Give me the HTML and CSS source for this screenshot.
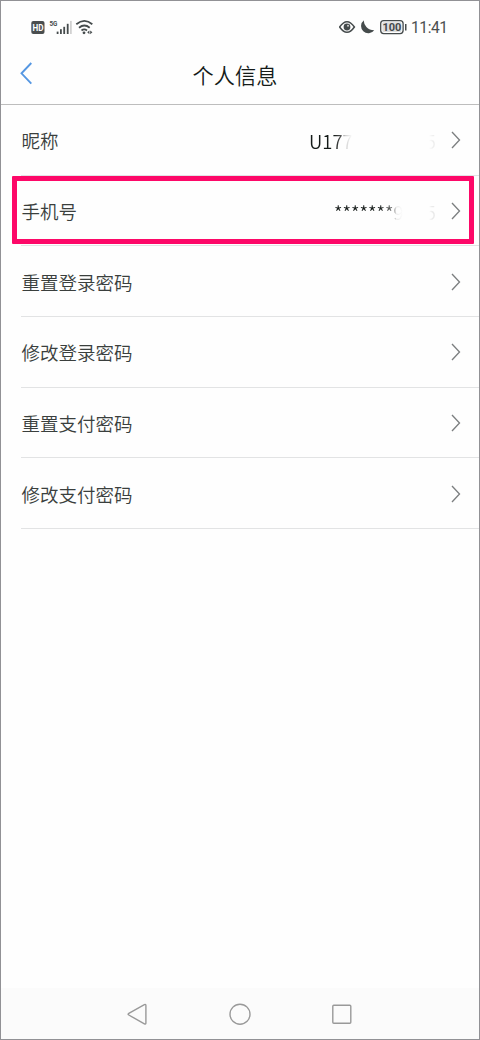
FILE: index.html
```html
<!DOCTYPE html>
<html lang="zh-CN">
<head>
<meta charset="utf-8">
<title>个人信息</title>
<link rel="stylesheet" href="styles.css">
</head>
<body>
<div class="phone">
  <div class="status">
    <svg class="status-left" width="64" height="20" viewBox="0 0 64 20">
      <rect x="0.3" y="4" width="13.2" height="13" rx="2" fill="#4a4e4f"/>
      <text x="1.5" y="14" class="hd" textLength="11" lengthAdjust="spacingAndGlyphs">HD</text>
      <text x="18.4" y="9.4" class="net" textLength="8" lengthAdjust="spacingAndGlyphs">5G</text>
      <g fill="#454b4c"><rect x="25.7" y="14.6" width="1.8" height="2.4"/><rect x="29" y="12.2" width="1.8" height="4.8"/><rect x="32.3" y="9.8" width="1.8" height="7.2"/><rect x="35.8" y="6.8" width="1.8" height="10.2"/></g>
      <rect x="39.1" y="3.9" width="1.6" height="13.1" fill="#ccc"/>
      <g fill="none" stroke="#454b4c" stroke-width="1.8"><path d="M45.3 7.3Q53.4 .5 61.3 7.3M48 10.7Q53.4 6.2 58.7 10.7M50.5 13.5Q53.2 11.4 56 13.5"/></g>
      <circle cx="53" cy="15.8" r="1.4" fill="#454b4c"/>
      <path d="M58.4 13.4L56.2 15.3L58.4 17.2ZM59.2 13.4L61.4 15.3L59.2 17.2Z" fill="#454b4c"/>
    </svg>
    <div class="status-right">
      <svg width="68" height="20" viewBox="0 0 68 20">
        <path d="M.6 10Q8 -.6 15.4 10Q8 20.6 .6 10Z" fill="none" stroke="#454b4c" stroke-width="1.5"/>
        <circle cx="8" cy="10" r="3.4" fill="#454b4c"/><circle cx="9" cy="8.8" r="1" fill="#ccc"/>
        <path d="M25 3.3A7.2 7.2 0 1 0 35.2 13.2Q30.5 13.2 27.4 10Q24.4 6.9 25 3.3Z" fill="#454b4c"/>
        <rect x="41.7" y="3.6" width="22.4" height="13" rx="3" fill="#fff" stroke="#454b4c" stroke-width="1.3"/>
        <rect x="43.4" y="5.3" width="19" height="9.6" rx="1" fill="#ddd"/>
        <text x="43.4" y="14" class="battery" textLength="19" lengthAdjust="spacingAndGlyphs">100</text>
        <rect x="66" y="7" width="1.5" height="6.5" fill="#454b4c"/>
      </svg>
      <span class="time">11:41</span>
    </div>
  </div>
  <header class="header">
    <svg class="back" width="13" height="23" viewBox="0 0 13 23"><path d="M11.3 1L1.5 11.3L11.3 21.6" fill="none" stroke="#5597e2" stroke-width="1.9"/></svg>
    <h1 class="title">个人信息</h1>
  </header>
  <main class="list">
    <div class="row"><span>昵称</span><span class="value nickname">U177<i class="remnant">5</i></span><svg class="chevron" viewBox="0 0 10 18"><path d="M1 1L8.5 9L1 17"/></svg></div>
    <div class="row"><span>手机号</span><span class="value mobile">*******<i class="first">9</i><i class="remnant">5</i></span><svg class="chevron" viewBox="0 0 10 18"><path d="M1 1L8.5 9L1 17"/></svg></div>
    <div class="row"><span>重置登录密码</span><svg class="chevron" viewBox="0 0 10 18"><path d="M1 1L8.5 9L1 17"/></svg></div>
    <div class="row"><span>修改登录密码</span><svg class="chevron" viewBox="0 0 10 18"><path d="M1 1L8.5 9L1 17"/></svg></div>
    <div class="row"><span>重置支付密码</span><svg class="chevron" viewBox="0 0 10 18"><path d="M1 1L8.5 9L1 17"/></svg></div>
    <div class="row"><span>修改支付密码</span><svg class="chevron" viewBox="0 0 10 18"><path d="M1 1L8.5 9L1 17"/></svg></div>
    <div class="highlight"></div>
  </main>
  <nav class="nav">
    <svg width="226" height="24" viewBox="0 0 226 24" fill="none" stroke="#999" stroke-width="1.4" stroke-linejoin="round">
      <path d="M1.8 11.3Q.4 12.2 1.8 13L17.4 21.8Q18.9 22.4 18.9 20.9V3.5Q18.9 2 17.4 2.6Z"/>
      <circle cx="113" cy="12.2" r="10"/>
      <rect x="205.8" y="3.2" width="18" height="18" rx="1"/>
    </svg>
  </nav>
</div>
</body>
</html>
```
FILE: styles.css
```css
* { box-sizing: border-box; }
body {
  margin: 0;
  background: #fff;
  font-family: "Noto Sans CJK SC", sans-serif;
  font-weight: 350;
}
.phone {
  display: flex;
  flex-direction: column;
  width: 480px;
  height: 1040px;
  border: 1px solid #919195;
  background: #fefefe;
}
.status {
  display: flex;
  justify-content: space-between;
  align-items: center;
  height: 52px;
  padding: 0 31px 0 30px;
}
.status svg { display: block; }
.status-right { display: flex; align-items: center; gap: 4px; }
.time {
  width: 37px;
  padding-top: 2px;
  font: 15.6px/20px Roboto, sans-serif;
  letter-spacing: -.45px;
  color: #4b4f50;
}
.hd { font: bold 8.5px Roboto, sans-serif; fill: #fff; }
.net { font: bold 8px Roboto, sans-serif; fill: #454b4c; }
.battery { font: bold 11.5px Roboto, sans-serif; fill: #454b4c; }
.header {
  display: grid;
  grid-template-columns: 28px 1fr 40px;
  align-items: center;
  height: 52px;
  padding-left: 19px;
  border-bottom: 1px solid #bdbdbd;
}
.back { align-self: start; margin-top: 9px; }
.title {
  margin: -7px 0 0;
  padding-right: 17px;
  text-align: center;
  font-size: 21.2px;
  line-height: 30px;
  font-weight: 350;
  color: #141a18;
}
.list { position: relative; flex: 1; }
.row {
  display: flex;
  align-items: center;
  height: 70.7px;
  margin-left: 20px;
  padding: 1px 18px 0 .6px;
  border-bottom: 1px solid #e2e3e4;
  font-size: 18.5px;
  line-height: 28px;
  color: #3a3f3d;
}
.chevron {
  width: 10px;
  height: 18px;
  margin-left: auto;
  fill: none;
  stroke: #7c7f80;
  stroke-width: 1.35;
}
.value {
  display: flex;
  margin-left: auto;
  margin-right: 14px;
  padding-top: 1px;
  background: linear-gradient(90deg, #202624, #202624) text;
  color: transparent;
}
.value + .chevron { margin-left: 0; }
.value i { font-style: normal; }
.nickname {
  width: 127px;
  margin-right: 15px;
  background-image: linear-gradient(90deg, #141a18 0 25px, #555 32px, #ccc 36px, #eee 41px, #fefefe 43px 120px, #eee 124px);
}
.mobile {
  width: 102px;
  margin-right: 15px;
  background-image: linear-gradient(90deg, #141a18 0 45px, #777 60px, #eee 62px 64px, #fefefe 69px 95px, #eaeaea 98px);
}
.remnant { margin-left: auto; }
.highlight {
  position: absolute;
  left: 11px;
  top: 71px;
  width: 462px;
  height: 68px;
  border: 5px solid #fd0868;
  border-radius: 1px;
}
.nav {
  display: flex;
  justify-content: center;
  align-items: center;
  height: 51px;
  background: #fbfbfb;
}
```
